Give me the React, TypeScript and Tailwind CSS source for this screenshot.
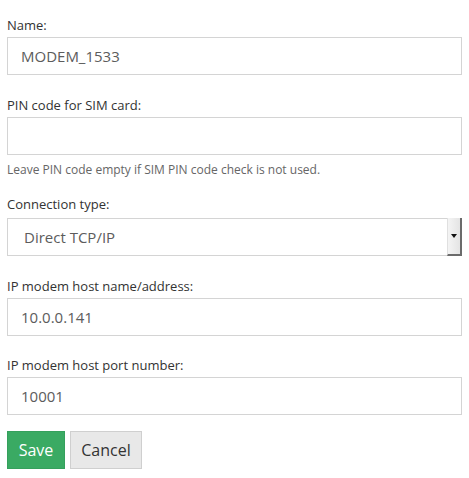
import { useState } from 'react'

const font = { fontFamily: '"Open Sans", "Noto Sans", sans-serif' }

function Field({
  label,
  value,
  onChange,
  className = '',
}: {
  label: string
  value: string
  onChange: (v: string) => void
  className?: string
}) {
  return (
    <div className={className}>
      <label className="block text-[13px] leading-5 text-[#333] mb-[2px]">{label}</label>
      <input
        className="block w-full h-[38px] border border-[#d4d4d4] bg-white px-[13px] text-[15px] text-[#5c5c5c] outline-none"
        value={value}
        onChange={e => onChange(e.target.value)}
      />
    </div>
  )
}

export default function App() {
  const [name, setName] = useState('MODEM_1533')
  const [pin, setPin] = useState('')
  const [host, setHost] = useState('10.0.0.141')
  const [port, setPort] = useState('10001')

  return (
    <div className="bg-white w-[469px] h-[478px] px-[7px] pt-[15px]" style={font}>
      <div className="w-[455px]">
        <Field label="Name:" value={name} onChange={setName} />
        <Field label="PIN code for SIM card:" value={pin} onChange={setPin} className="mt-5" />
        <p className="mt-[5px] text-[12px] leading-5 text-[#666]">
          Leave PIN code empty if SIM PIN code check is not used.
        </p>

        {/* Connection type */}
        <div className="mt-[14px]">
          <label className="block text-[13px] leading-5 text-[#333] mb-[4px]">Connection type:</label>
          <div className="flex h-[38px] border border-[#d4d4d4] bg-white">
            <div className="flex-1 flex items-center pl-[16px] text-[15px] text-[#5c5c5c]">Direct TCP/IP</div>
            <div className="w-[15px] my-[-1px] mr-[-1px] flex items-center justify-center bg-gradient-to-r from-[#f4f4f4] to-[#e4e4e4] border-r-2 border-b-2 border-[#6b6b6b] border-l border-l-[#e0e0e0]">
              <svg width="6" height="4" viewBox="0 0 6 4">
                <path d="M0 0h6L3 4z" fill="#111" />
              </svg>
            </div>
          </div>
        </div>

        <Field label="IP modem host name/address:" value={host} onChange={setHost} className="mt-[20px]" />
        <Field label="IP modem host port number:" value={port} onChange={setPort} className="mt-[19px]" />

        <div className="mt-4 flex gap-[5px]">
          <button className="h-[38px] w-[58px] bg-[#3aaa63] border border-[#35a05c] text-white text-[16px]">
            Save
          </button>
          <button className="h-[38px] w-[72px] bg-[#e8e8e8] border border-[#cfcfcf] text-[#333] text-[16px]">
            Cancel
          </button>
        </div>
      </div>
    </div>
  )
}
